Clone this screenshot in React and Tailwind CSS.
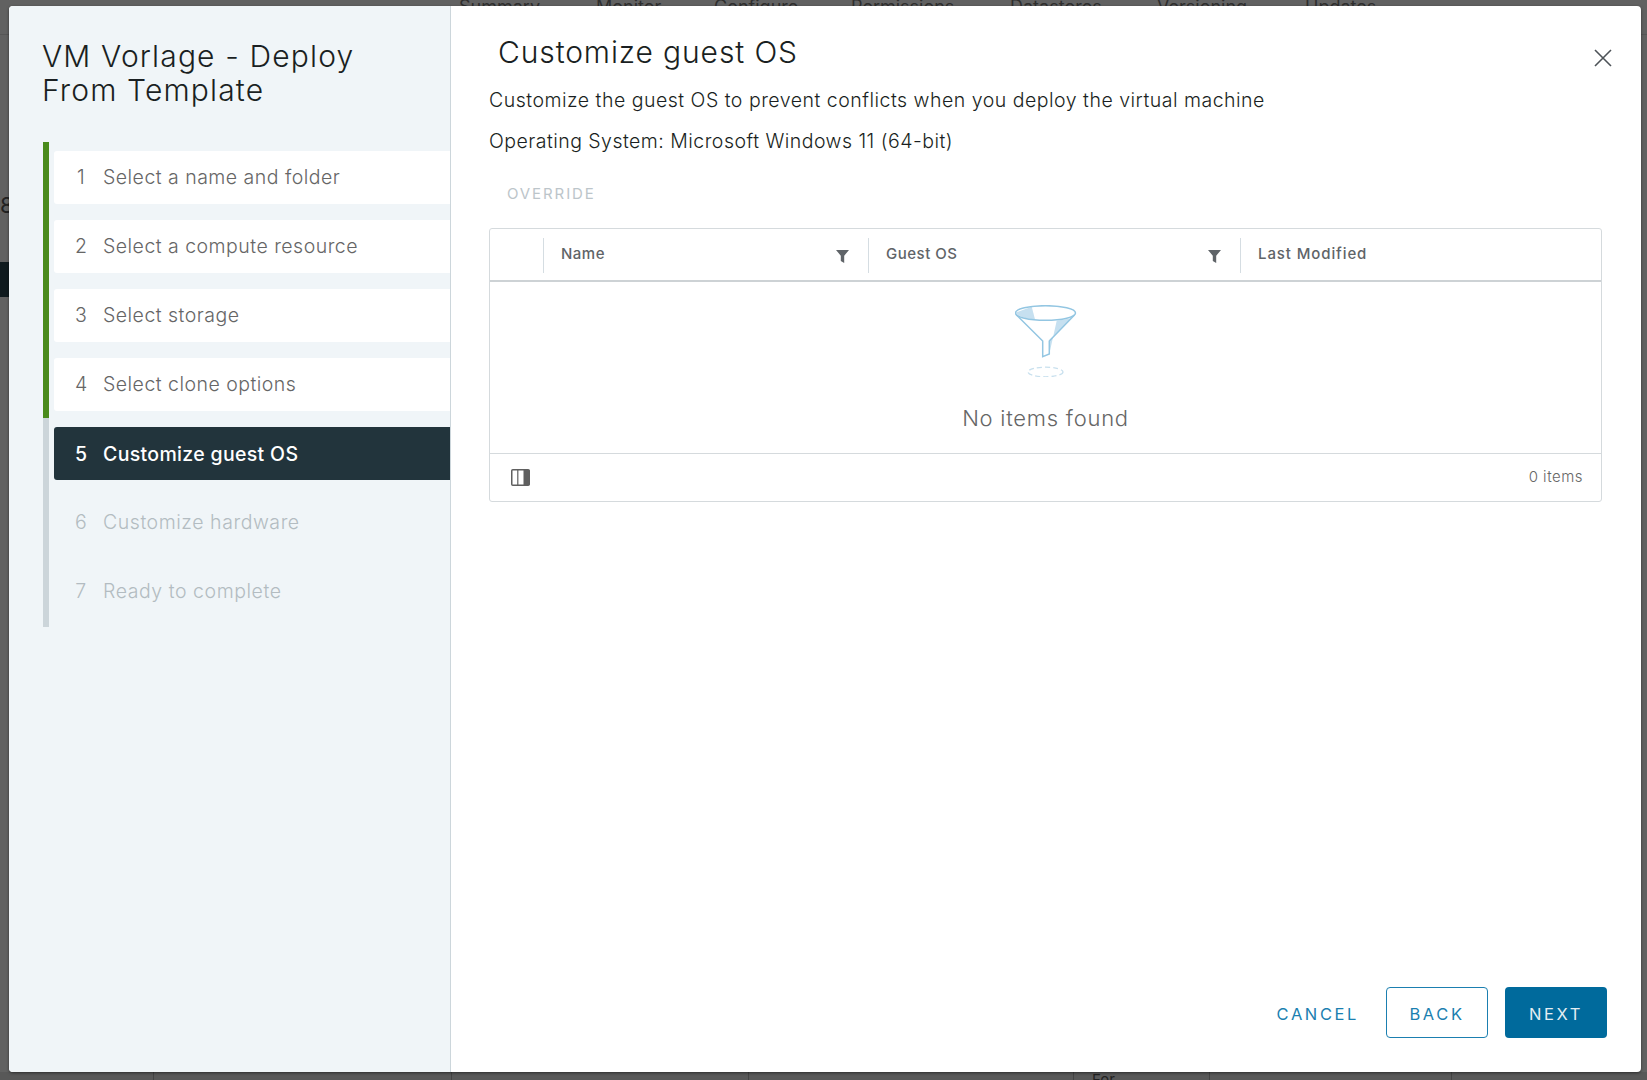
import React from "react";

const steps = [
  ["1", "Select a name and folder", "done"],
  ["2", "Select a compute resource", "done"],
  ["3", "Select storage", "done"],
  ["4", "Select clone options", "done"],
  ["5", "Customize guest OS", "active"],
  ["6", "Customize hardware", "todo"],
  ["7", "Ready to complete", "todo"],
];

function Step({ n, label, state }) {
  const tone =
    state === "done"
      ? "bg-white text-[#666666] font-light tracking-[0.48px]"
      : state === "active"
      ? "bg-[#22343c] pt-[2px] text-white font-medium tracking-[0.33px]"
      : "text-[#b3bcc1] font-light tracking-[0.55px]";
  return (
    <div className={`flex h-[53px] items-center rounded-l-[3px] text-[19.5px] ${tone}`}>
      <span className="ml-[21px] mr-[16px] w-[12px] text-center">{n}</span>
      <span>{label}</span>
    </div>
  );
}

function Filter() {
  return (
    <svg width="13" height="13" viewBox="0 0 13 13" className="mt-[12px]">
      <path d="M0 0H13L8.2 5.8V13L4.8 11V5.8Z" fill="#5f6468" />
    </svg>
  );
}

function Funnel() {
  return (
    <svg width="62" height="72" viewBox="0 0 62 72" fill="none">
      <path d="M0.8 7.7L16.7 1.7L20 14.3C10 14 3 11 0.8 7.7Z" fill="#c6e0f0" />
      <path d="M41.7 15.7L56.7 13.3L34.3 35V49L41.7 15.7Z" fill="#c6e0f0" />
      <ellipse cx="30.5" cy="8" rx="30" ry="7.3" stroke="#93c6e2" strokeWidth="1.5" />
      <path d="M1.5 10L27.7 36V51.7L34.3 49V36L59.5 10" stroke="#93c6e2" strokeWidth="1.5" />
      <ellipse cx="30.5" cy="67" rx="17.5" ry="4.8" stroke="#c8e0ee" strokeWidth="1.3" strokeDasharray="5 3" />
    </svg>
  );
}

export default function App() {
  const font = { fontFamily: "Inter, 'Noto Sans', sans-serif" };
  return (
    <div className="relative h-[1080px] w-[1647px] overflow-hidden bg-[#616161]" style={font}>
      {/* page behind the dimmed backdrop */}
      <div className="flex h-[35px] border-b border-[#565656] pl-[459px] text-[18px] leading-[14px] text-[#2e2e2e]">
        <span className="w-[137px]">Summary</span>
        <span className="w-[118px]">Monitor</span>
        <span className="w-[137px]">Configure</span>
        <span className="w-[159px]">Permissions</span>
        <span className="w-[147px]">Datastores</span>
        <span className="w-[148px]">Versioning</span>
        <span>Updates</span>
      </div>
      <div className="mt-[158px] text-[22px] leading-[24px] text-[#222]">8</div>
      <div className="mt-[45px] h-[35px] w-[9px] bg-[#0f1a1e]" />
      <div className="absolute bottom-0 left-0 flex h-[8px] w-full bg-[#585858] text-[15px] leading-[16px] text-[#222]">
        <div className="w-[154px] border-r border-[#444]" />
        <div className="w-[298px] border-r border-[#444]" />
        <div className="w-[297px] border-r border-[#444]" />
        <div className="w-[325px] border-r border-[#444]" />
        <div className="w-[136px] border-r border-[#444] pl-[18px]">For</div>
        <div className="w-[242px] border-r border-[#444]" />
      </div>

      {/* wizard dialog */}
      <div className="absolute left-[9px] top-[6px] flex h-[1066px] w-[1632px] overflow-hidden rounded-[4px] bg-white shadow-[0_1px_3px_rgba(0,0,0,0.5)]">
        <aside className="flex w-[442px] shrink-0 flex-col border-r border-[#ccd6db] bg-[#f0f5f8] pl-[34px]">
          <h1 className="ml-[-1px] mt-[33px] text-[30px] font-light leading-[34px] tracking-[1.15px] text-[#1a1f22]">
            VM Vorlage - Deploy
            <br />
            From Template
          </h1>
          <div className="mt-[35px] flex h-[485px]">
            <div className="flex w-[6px] flex-col">
              <div className="h-[276px] bg-[#4a8b1c]" />
              <div className="flex-1 bg-[#ccd5da]" />
            </div>
            <div className="flex flex-1 flex-col gap-[16px] pl-[5px] pt-[9px]">
              {steps.map(([n, label, state]) => (
                <Step key={n} n={n} label={label} state={state} />
              ))}
            </div>
          </div>
        </aside>

        <main className="relative flex flex-1 flex-col pl-[38px] pr-[39px]">
          <button className="absolute right-[28px] top-[42px]" aria-label="Close">
            <svg width="20" height="20" viewBox="0 0 20 20" fill="none" className="block">
              <path d="M2 2L18 18M18 2L2 18" stroke="#4d5358" strokeWidth="1.6" />
            </svg>
          </button>
          <h2 className="ml-[9px] mt-[28px] text-[30px] font-light leading-[36px] tracking-[0.88px] text-[#1a1f22]">Customize guest OS</h2>
          <p className="mt-[17px] text-[19.5px] font-light leading-[26px] tracking-[0.5px] text-[#1a1f22]">
            Customize the guest OS to prevent conflicts when you deploy the virtual machine
          </p>
          <p className="mt-[15px] text-[19.5px] font-light leading-[26px] tracking-[0.47px] text-[#1a1f22]">
            Operating System: Microsoft Windows 11 (64-bit)
          </p>
          <div className="ml-[18px] mt-[30px] text-[15px] leading-[20px] tracking-[1.9px] text-[#bcc5ca]">OVERRIDE</div>

          <div className="mt-[24px] flex h-[274px] flex-col rounded-[3px] border border-[#d5dadd]">
            <div className="flex h-[53px] shrink-0 items-start border-b-[2px] border-[#cdd2d5] pt-[9px] text-[15px] font-medium leading-[31px] tracking-[0.5px] text-[#5f6468]">
              <div className="h-[35px] w-[54px] border-r border-[#d5dde2]" />
              <div className="flex h-[35px] w-[325px] justify-between border-r border-[#d5dde2] pl-[17px] pr-[19px]">
                <span>Name</span>
                <Filter />
              </div>
              <div className="flex h-[35px] w-[372px] justify-between border-r border-[#d5dde2] pl-[17px] pr-[19px]">
                <span>Guest OS</span>
                <Filter />
              </div>
              <div className="pl-[17px] tracking-[0.9px]">Last Modified</div>
            </div>
            <div className="flex flex-1 flex-col items-center pt-[23px]">
              <Funnel />
              <div className="mt-[25px] text-[22px] font-light leading-[32px] tracking-[0.75px] text-[#666666]">No items found</div>
            </div>
            <div className="flex h-[48px] shrink-0 items-center justify-between border-t border-[#d5dadd] pl-[21px] pr-[18px]">
              <svg width="19" height="17" viewBox="0 0 19 17" className="block">
                <rect x="0.75" y="0.75" width="17.5" height="15.5" rx="1" fill="#fff" stroke="#5f5f5f" strokeWidth="1.5" />
                <path d="M6.8 1V16" stroke="#5f5f5f" strokeWidth="1.2" />
                <rect x="12.5" y="1" width="6" height="15" fill="#5f5f5f" />
              </svg>
              <span className="text-[15px] font-light tracking-[0.5px] text-[#666666]">0 items</span>
            </div>
          </div>

          <div className="mb-[34px] mr-[-5px] mt-auto flex items-center justify-end text-[16.5px] leading-none tracking-[2.6px]">
            <button className="mr-[27px] pt-[3px] text-[#1b7fb0]">CANCEL</button>
            <button className="mr-[17px] h-[51px] w-[102px] rounded-[4px] border border-[#1b7fb0] pt-[3px] text-[#1b7fb0]">BACK</button>
            <button className="h-[51px] w-[102px] rounded-[4px] bg-[#006a9c] pt-[3px] text-[#e4eef3]">NEXT</button>
          </div>
        </main>
      </div>
    </div>
  );
}
